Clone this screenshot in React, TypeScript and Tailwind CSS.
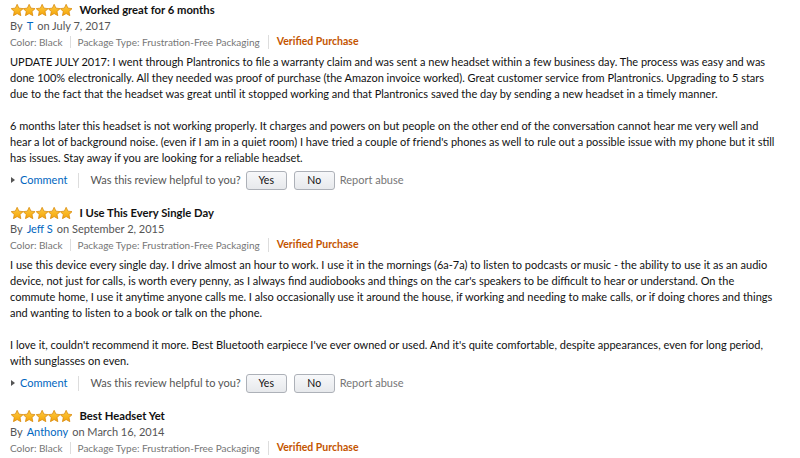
import React from 'react';

type Review = {
    title: string;
    author: string;
    date: string;
    paragraphs: string[][];
};

const REVIEWS: Review[] = [
    {
        title: 'Worked great for 6 months',
        author: 'T',
        date: 'July 7, 2017',
        paragraphs: [
            [
                'UPDATE JULY 2017: I went through Plantronics to file a warranty claim and was sent a new headset within a few business day. The process was easy and was',
                'done 100% electronically. All they needed was proof of purchase (the Amazon invoice worked). Great customer service from Plantronics. Upgrading to 5 stars',
                'due to the fact that the headset was great until it stopped working and that Plantronics saved the day by sending a new headset in a timely manner.',
            ],
            [
                '6 months later this headset is not working properly. It charges and powers on but people on the other end of the conversation cannot hear me very well and',
                "hear a lot of background noise. (even if I am in a quiet room) I have tried a couple of friend's phones as well to rule out a possible issue with my phone but it still",
                'has issues. Stay away if you are looking for a reliable headset.',
            ],
        ],
    },
    {
        title: 'I Use This Every Single Day',
        author: 'Jeff S',
        date: 'September 2, 2015',
        paragraphs: [
            [
                'I use this device every single day. I drive almost an hour to work. I use it in the mornings (6a-7a) to listen to podcasts or music - the ability to use it as an audio',
                "device, not just for calls, is worth every penny, as I always find audiobooks and things on the car's speakers to be difficult to hear or understand. On the",
                'commute home, I use it anytime anyone calls me. I also occasionally use it around the house, if working and needing to make calls, or if doing chores and things',
                'and wanting to listen to a book or talk on the phone.',
            ],
            [
                "I love it, couldn't recommend it more. Best Bluetooth earpiece I've ever owned or used. And it's quite comfortable, despite appearances, even for long period,",
                'with sunglasses on even.',
            ],
        ],
    },
    {
        title: 'Best Headset Yet',
        author: 'Anthony',
        date: 'March 16, 2014',
        paragraphs: [],
    },
];

const Star = () => (
    <svg width="12.3" height="12.3" viewBox="1 1 22 22" className="shrink-0">
        <defs>
            <linearGradient id="starFill" x1="0" y1="0" x2="0" y2="1">
                <stop offset="0" stopColor="#ffcc40" />
                <stop offset="1" stopColor="#f4a40a" />
            </linearGradient>
        </defs>
        <path
            d="M12 1.6l3.2 6.8 7.4.9-5.5 5.1 1.5 7.4L12 18.1l-6.6 3.7 1.5-7.4-5.5-5.1 7.4-.9z"
            fill="url(#starFill)"
            stroke="#d9890a"
            strokeWidth="1.4"
            strokeLinejoin="round"
        />
    </svg>
);

const Stars = () => (
    <div className="ml-[1px] flex">
        <Star />
        <Star />
        <Star />
        <Star />
        <Star />
    </div>
);

const VoteButton = ({ label }: { label: string }) => (
    <button className="h-[19px] w-[41px] rounded-[3px] border border-[#adb1b8] bg-gradient-to-b from-[#f7f8fa] to-[#e7e9ec] text-[10.5px] leading-none text-[#111]">
        {label}
    </button>
);

const ReviewItem = ({ review, first }: { review: Review; first: boolean }) => (
    <div className={`flex flex-col ${first ? 'mt-[2px]' : 'mt-[15px]'}`}>
        <div className="flex h-4 items-center gap-[7px]">
            <Stars />
            <span className="text-[11.25px] font-bold text-[#111]">{review.title}</span>
        </div>
        <div className="flex h-4 items-center text-[11px] text-[#555]">
            <span>By</span>
            <span className="ml-[4px] text-[#0066c0]">{review.author}</span>
            <span className="ml-[4px]">on {review.date}</span>
        </div>
        <div className="flex h-4 items-center text-[10px] text-[#767676]">
            <span>Color: Black</span>
            <span className="mx-[7px] inline-block h-[12px] w-px bg-[#dddddd]" />
            <span>Package Type: Frustration-Free Packaging</span>
            <span className="mx-[8px] inline-block h-[14px] w-px bg-[#dddddd]" />
            <span className="text-[10.5px] font-bold text-[#c45500]">Verified Purchase</span>
        </div>
        {review.paragraphs.length > 0 && (
            <>
                <div className="mt-[4px] flex flex-col text-[11px] leading-[16px] text-[#111]">
                    {review.paragraphs.map((p, i) => (
                        <div key={i} className={i > 0 ? 'mt-4' : ''}>
                            {p.map((line, j) => (
                                <div key={j} className="whitespace-nowrap">
                                    {line}
                                </div>
                            ))}
                        </div>
                    ))}
                </div>
                <div className="mt-[4px] flex h-5 items-center text-[11px]">
                    <span className="ml-[1px] mr-[5px] inline-block h-0 w-0 border-y-[3px] border-l-[4px] border-y-transparent border-l-[#555]" />
                    <span className="text-[#0066c0]">Comment</span>
                    <span className="mx-[11px] inline-block h-[15px] w-px bg-[#dddddd]" />
                    <span className="text-[#555]">Was this review helpful to you?</span>
                    <span className="ml-[5px] flex gap-[7px]">
                        <VoteButton label="Yes" />
                        <VoteButton label="No" />
                    </span>
                    <span className="ml-[5px] text-[#767676]">Report abuse</span>
                </div>
            </>
        )}
    </div>
);

export default function App() {
    return (
        <div className="h-[458px] w-[800px] overflow-hidden bg-white px-[10px] font-['Lato',sans-serif]">
            {REVIEWS.map((r, i) => (
                <ReviewItem key={i} review={r} first={i === 0} />
            ))}
        </div>
    );
}
